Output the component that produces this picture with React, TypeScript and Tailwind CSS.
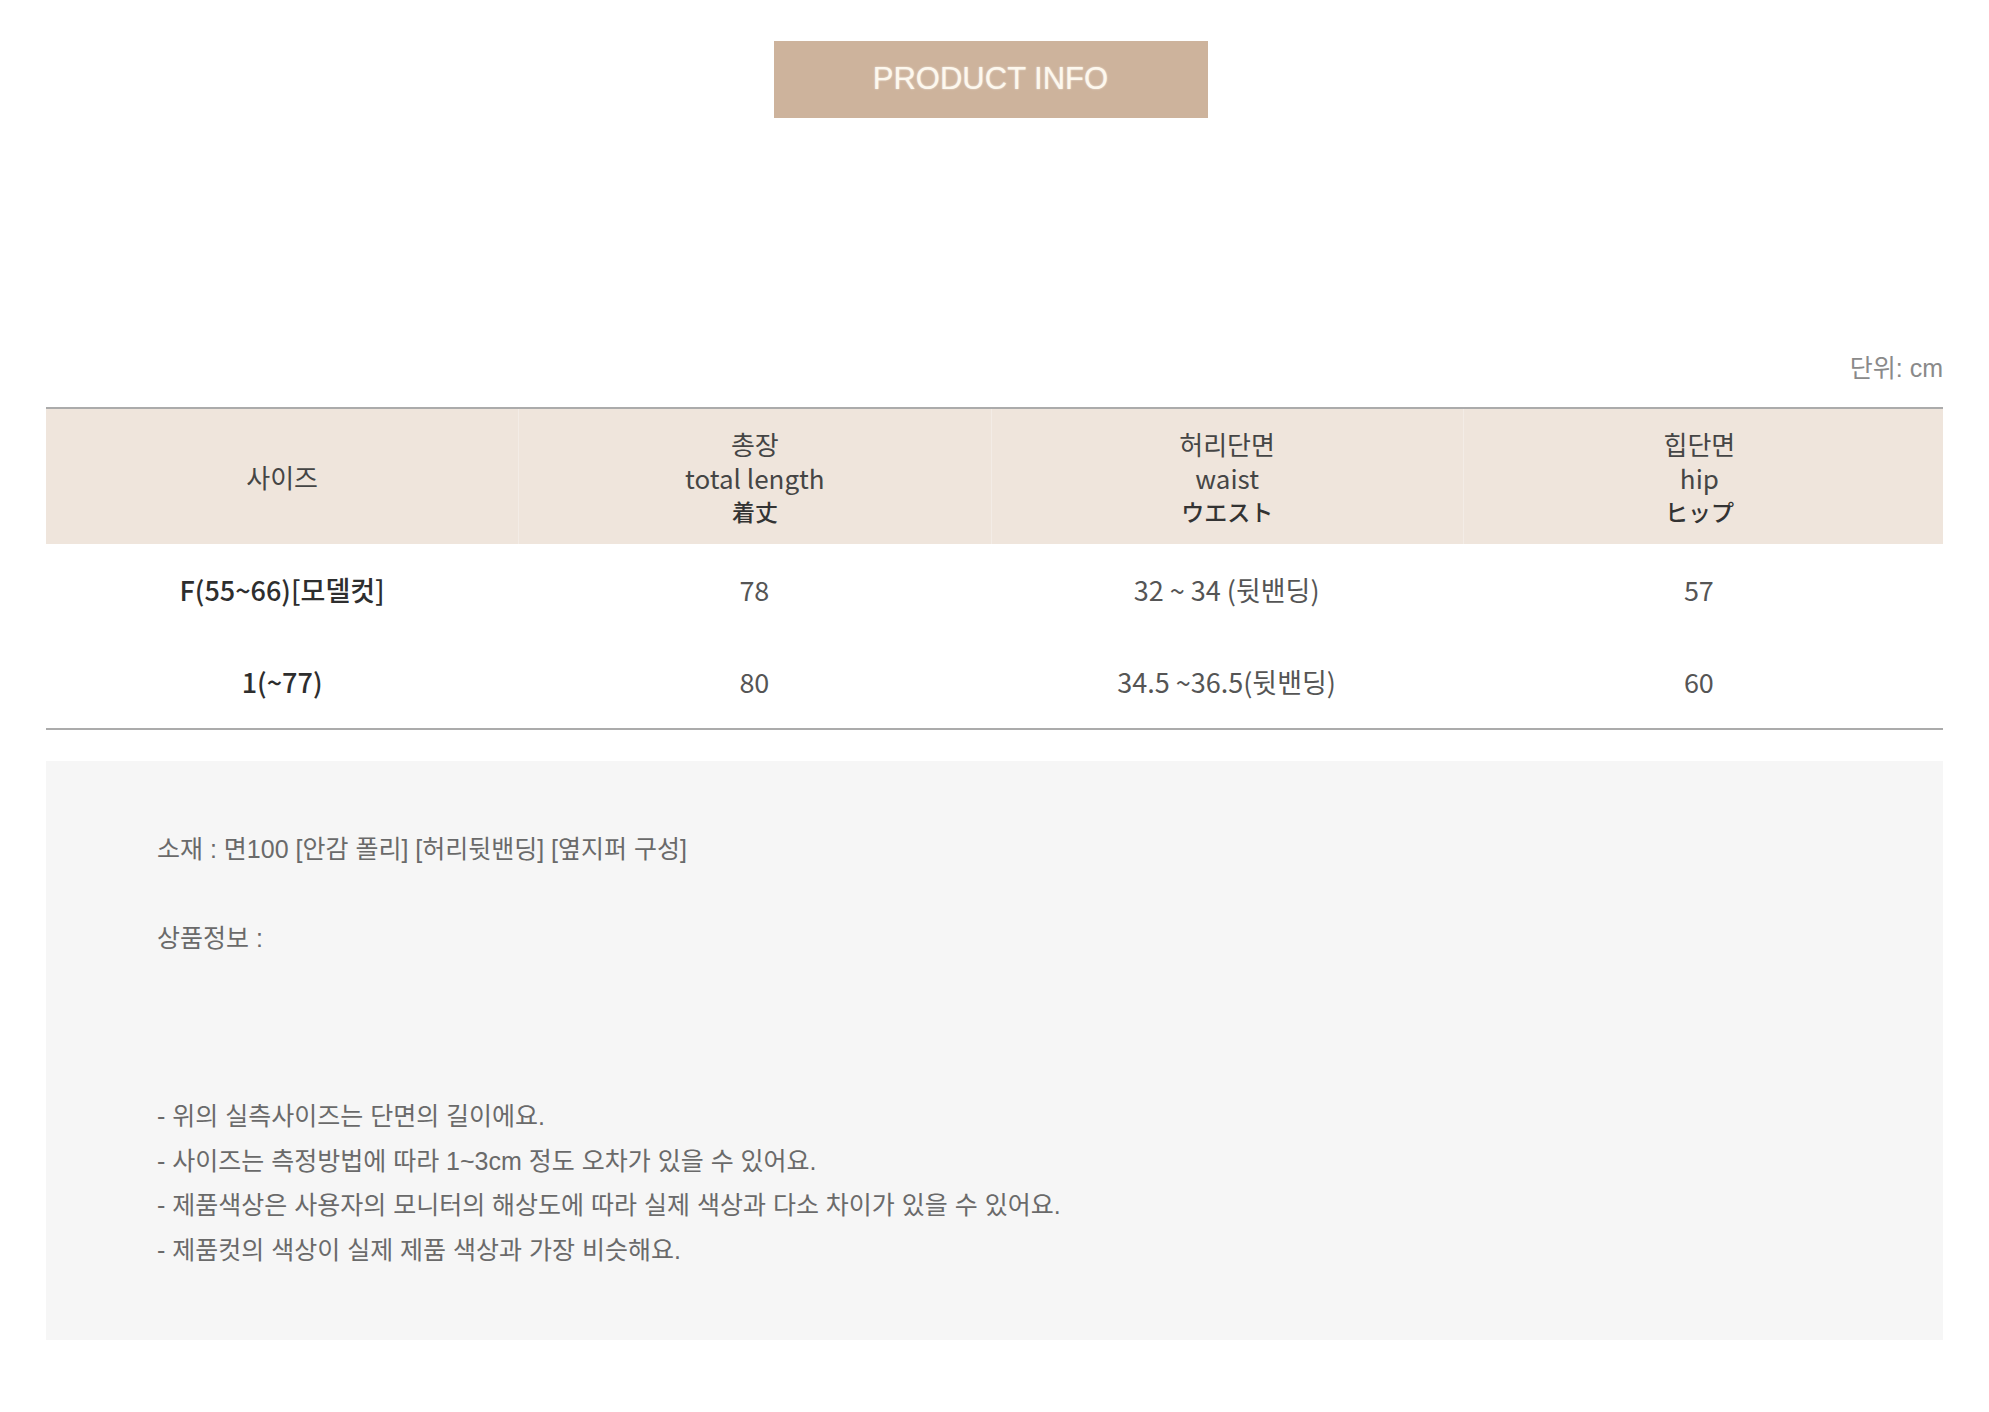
import React from 'react';

const headers = [
  { ko: '사이즈' },
  { ko: '총장', en: 'total length', jp: '着丈' },
  { ko: '허리단면', en: 'waist', jp: 'ウエスト' },
  { ko: '힙단면', en: 'hip', jp: 'ヒップ' },
];

const rows = [
  ['F(55~66)[모델컷]', '78', '32 ~ 34 (뒷밴딩)', '57'],
  ['1(~77)', '80', '34.5 ~36.5(뒷밴딩)', '60'],
];

const notes = [
  '- 위의 실측사이즈는 단면의 길이에요.',
  '- 사이즈는 측정방법에 따라 1~3cm 정도 오차가 있을 수 있어요.',
  '- 제품색상은 사용자의 모니터의 해상도에 따라 실제 색상과 다소 차이가 있을 수 있어요.',
  '- 제품컷의 색상이 실제 제품 색상과 가장 비슷해요.',
];

export default function App() {
  return (
    <div className="min-h-[1412px] bg-white px-[46px] pt-[41px] pb-[72px]">
      {/* 타이틀 */}
      <div className="flex justify-center pr-[8px]">
        <div className="w-[434px] h-[77px] bg-[#cdb39c] flex items-center justify-center">
          <span className="text-[31px] text-[#fdf8ee] font-['Liberation_Sans',sans-serif] [text-shadow:0_0_2px_rgba(255,255,255,0.7)]">
            PRODUCT INFO
          </span>
        </div>
      </div>

      {/* 단위 */}
      <div className="mt-[236px] flex justify-end">
        <span className="text-[25px] leading-[28px] text-[#8a8a8a] font-['Liberation_Sans','Noto_Sans_CJK_KR',sans-serif]">
          단위: cm
        </span>
      </div>

      {/* 사이즈 표 */}
      <div className="mt-[25px] border-t-2 border-b-2 border-[#ababab] font-['Noto_Sans_CJK_KR',sans-serif]">
        <div className="grid grid-cols-4 pr-[8px] bg-[#efe5dc] h-[135px]">
          {headers.map((h, i) => (
            <div
              key={i}
              className={`flex flex-col items-center justify-center text-[26px] leading-[34px] text-[#454545] ${i > 0 ? 'border-l border-[#f3ece6]' : ''}`}
            >
              <span className="leading-[34px]">{h.ko}</span>
              {h.en && <span className="leading-[34px]">{h.en}</span>}
              {h.jp && <span className="text-[23px] leading-[32px] font-medium text-[#333]">{h.jp}</span>}
            </div>
          ))}
        </div>
        {rows.map((r, ri) => (
          <div key={ri} className="grid grid-cols-4 pr-[8px] h-[92px]">
            {r.map((c, ci) => (
              <div
                key={ci}
                className={`flex items-center justify-center text-[27px] ${ci === 0 ? 'font-medium text-[#2e2e2e]' : 'text-[#555]'}`}
              >
                {c}
              </div>
            ))}
          </div>
        ))}
      </div>

      {/* 상품 설명 */}
      <div className="mt-[31px] bg-[#f6f6f6] px-[111px] pt-[66px] pb-[68px] text-[25px] leading-[44.5px] text-[#6a6a6a] font-['Liberation_Sans','Noto_Sans_CJK_KR',sans-serif]">
        <p>소재 : 면100 [안감 폴리] [허리뒷밴딩] [옆지퍼 구성]</p>
        <p>&nbsp;</p>
        <p>상품정보 :</p>
        <p>&nbsp;</p>
        <p>&nbsp;</p>
        <p>&nbsp;</p>
        {notes.map((n, i) => (
          <p key={i}>{n}</p>
        ))}
      </div>
    </div>
  );
}
